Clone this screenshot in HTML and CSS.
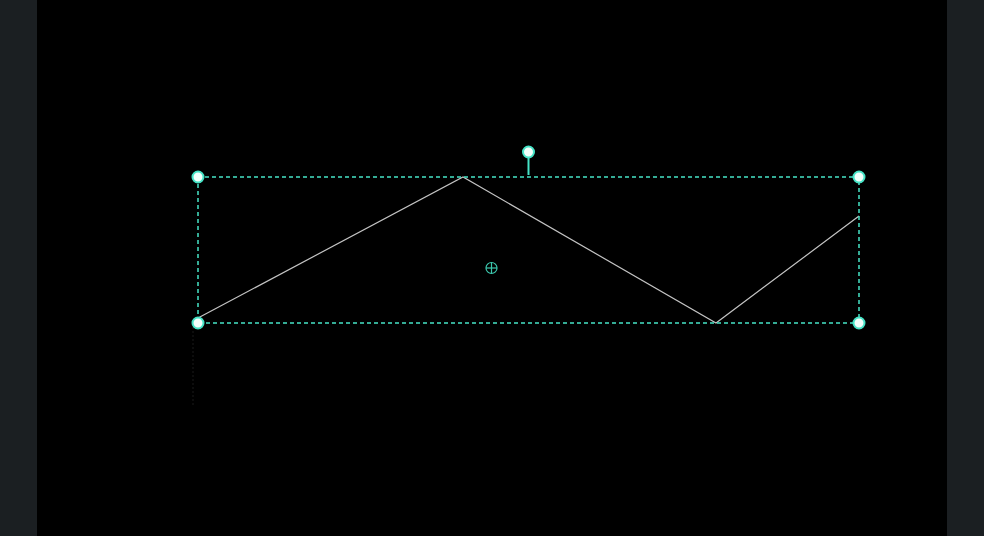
FILE: index.html
```html
<!DOCTYPE html>
<html>
<head>
<meta charset="utf-8">
<link rel="stylesheet" href="styles.css">
</head>
<body>
<div class="app">
  <div class="side"></div>
  <div class="canvas">
    <svg class="stage" width="910" height="536" viewBox="0 0 910 536" xmlns="http://www.w3.org/2000/svg">
      <line class="ghost" x1="156" y1="323" x2="156" y2="405"/>
      <polyline class="shape" points="161,318 426,177 679,323 822,216"/>
      <rect class="sel" x="161" y="177" width="661" height="146"/>
      <line class="stem" x1="491.5" y1="157" x2="491.5" y2="175"/>
      <circle class="handle" cx="491.5" cy="152" r="5.5"/>
      <circle class="handle" cx="161" cy="177" r="5.5"/>
      <circle class="handle" cx="822" cy="177" r="5.5"/>
      <circle class="handle" cx="161" cy="323" r="5.5"/>
      <circle class="handle" cx="822" cy="323" r="5.5"/>
      <g class="center">
        <circle cx="454.5" cy="268" r="5.5"/>
        <line x1="449" y1="268" x2="460" y2="268"/>
        <line x1="454.5" y1="262.5" x2="454.5" y2="273.5"/>
      </g>
    </svg>
  </div>
  <div class="side"></div>
</div>
</body>
</html>
```
FILE: styles.css
```css
html, body {
  margin: 0;
  padding: 0;
  background: #1b1f22;
  font-family: "Liberation Sans", Arial, sans-serif;
}
.app {
  display: flex;
  width: 984px;
  height: 536px;
  overflow: hidden;
}
.side {
  width: 37px;
  flex: 0 0 37px;
  background: #1b1f22;
}
.canvas {
  flex: 0 0 910px;
  width: 910px;
  height: 536px;
  background: #000;
}
.stage {
  display: block;
}
.shape {
  fill: none;
  stroke: #c4c4c4;
  stroke-width: 1.2;
}
.sel {
  fill: none;
  stroke: #45e3c6;
  stroke-width: 1.5;
  stroke-dasharray: 4 3;
}
.stem {
  stroke: #45e3c6;
  stroke-width: 2;
}
.handle {
  fill: #f2fffb;
  stroke: #45e3c6;
  stroke-width: 2;
}
.ghost {
  stroke: #1a1a1a;
  stroke-width: 1;
  stroke-dasharray: 2 2;
}
.center circle, .center line {
  fill: none;
  stroke: #3cc8ae;
  stroke-width: 1.2;
}
```
